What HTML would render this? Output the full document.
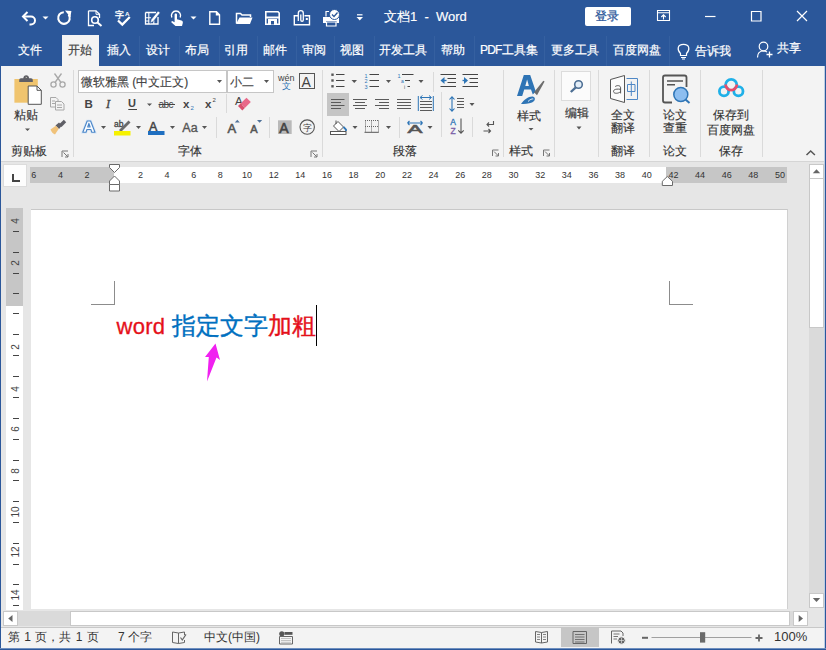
<!DOCTYPE html>
<html><head><meta charset="utf-8">
<style>
*{margin:0;padding:0;box-sizing:border-box}
html,body{width:826px;height:650px;overflow:hidden;background:#e6e6e6;font-family:"Liberation Sans",sans-serif;}
.a{position:absolute}
.t{position:absolute;white-space:nowrap;line-height:1}
svg{position:absolute;overflow:visible}
#title{left:0;top:0;width:826px;height:66px;background:#2b579a}
.tab{position:absolute;top:42px;font-size:12px;color:#fff;line-height:16px;white-space:nowrap;-webkit-text-stroke:0.2px #fff}
.sep{position:absolute;background:#e1e1e1;width:1px}
.lbl{position:absolute;font-size:12px;color:#333;line-height:14px;white-space:nowrap;-webkit-text-stroke:0.15px #333}
.dd{position:absolute;width:0;height:0;border-left:2.5px solid transparent;border-right:2.5px solid transparent;border-top:3px solid #555}
.rn{position:absolute;font-size:9px;color:#333;line-height:9px;top:171px;white-space:nowrap}
.vt{position:absolute;left:13px;width:6px;height:1px;background:#444}
.vn{position:absolute;font-size:10px;color:#444;line-height:10px;transform:rotate(-90deg);white-space:nowrap}
.sb{position:absolute;font-size:12px;color:#333;line-height:14px;white-space:nowrap}
</style></head><body>
<!-- title + tabs -->
<div id="title" class="a"></div>

<svg style="left:0;top:0" width="826" height="34" viewBox="0 0 826 34" fill="none" stroke="#fff" stroke-width="1.6">
 <!-- undo -->
 <path d="M24 16.5 H31 A4 4 0 0 1 31 24.5 H29.5" stroke-width="2"/>
 <path d="M27.5 12 L23 16.5 L27.5 21" stroke-width="2"/>
 <path d="M42.5 16.5 H48.5 L45.5 19.5 Z" fill="#fff" stroke="none"/>
 <!-- redo circle -->
 <path d="M63.8 12.2 A5.8 5.8 0 1 0 68.6 14.5" stroke-width="2.1"/>
 <path d="M65 10.6 L71.4 10.9 L70.4 17.2 Z" fill="#fff" stroke="none"/>
 <!-- print preview -->
 <path d="M88.5 10.8 H96 L99.5 14.3 V18 M88.5 10.8 V25.5 H94" stroke-width="1.3"/>
 <path d="M96 10.8 V14.3 H99.5" stroke-width="1"/>
 <circle cx="95" cy="20" r="3.3" stroke-width="1.6"/>
 <path d="M97.5 22.5 L101.5 26" stroke-width="2"/>
 <!-- spelling -->
 <text x="114.8" y="17.8" font-size="8.6" fill="#fff" stroke="#fff" stroke-width="0.35" font-family="Liberation Sans">字</text>
 <text x="125" y="15.6" font-size="6.2" font-weight="bold" fill="#fff" stroke="none" font-family="Liberation Sans">A</text>
 <path d="M118 20.5 L122.3 24.6 L129.8 17" stroke-width="2.3"/>
 <!-- edit table -->
 <path d="M145.5 12.5 H156 M145.5 12.5 V24 H158 V17" stroke-width="1.3"/>
 <path d="M148.8 12.5 V24 M145.5 17.8 H151 M145.5 21 H149 M153.8 20.5 V24" stroke-width="1.1"/>
 <path d="M150.2 23 L151.2 19.5 L158 11 L160.2 12.8 L153.4 21.4 Z" fill="#fff" stroke="#2b579a" stroke-width="0.6"/>
 <!-- touch -->
 <path d="M171.8 17.5 A4.6 4.6 0 1 1 180.2 17.5" stroke-width="1.4"/>
 <path d="M174.6 14.5 C174.6 13 177 13 177 14.5 V19.3 L181.5 20.5 C182.8 21 183 22 182.8 23 L182 26 H175.5 L171.5 22.5 C171 21.8 171.8 20.8 172.6 21.2 L174.6 22.3 Z" fill="#fff" stroke="none"/>
 <path d="M190.5 16.5 H196.5 L193.5 19.5 Z" fill="#fff" stroke="none"/>
 <!-- new doc -->
 <path d="M209.8 11.8 H216.5 L219.5 14.8 V24.3 H209.8 Z M216.5 11.8 V14.8 H219.5" stroke-width="1.4"/>
 <!-- open folder -->
 <path d="M236.5 23.5 V13.5 H240.5 L242 15 H250.5 V17" stroke-width="1.5"/>
 <path d="M236 24 L239.5 17.5 H252.5 L250 24 Z" fill="#fff" stroke="none"/>
 <!-- save -->
 <path d="M265.8 11.8 H278 L279.2 13 V24.2 H265.8 Z" stroke-width="1.6"/>
 <path d="M265.8 17.5 H279.2" stroke-width="2"/>
 <path d="M268 19 H277 V24.5 H268 Z" fill="#fff" stroke="none"/>
 <path d="M271 21 H274 V24.5 H271 Z" fill="#2b579a" stroke="none"/>
 <!-- attach -->
 <path d="M298 15.8 H294.3 V24.8 H309.5 V15.8 H304.5" stroke-width="1.4"/>
 <path d="M298.3 21 V13.2 A2.5 2.5 0 0 1 303.3 13.2 V20 A1.25 1.25 0 0 1 300.8 20 V14.5" stroke-width="1.3"/>
 <rect x="305.8" y="18" width="2" height="2" fill="#fff" stroke="none"/>
 <!-- printer check -->
 <path d="M323 17 H339 V23 H336.5 V21 H326 V23 H323 Z" fill="#fff" stroke="none"/>
 <path d="M326.5 22 H336 V26 H326.5 Z" stroke-width="1.2"/>
 <path d="M326 16.5 V11.5 H329" stroke-width="1.2"/>
 <circle cx="334.5" cy="14.5" r="5" fill="#fff" stroke="#2b579a" stroke-width="1"/>
 <path d="M332 14.5 L334 16.5 L337.5 12.5" stroke="#2b579a" stroke-width="1.3"/>
 <!-- customize -->
 <path d="M357 14.8 H362.5" stroke-width="1.2"/>
 <path d="M356.5 17 H363 L359.75 20.5 Z" fill="#fff" stroke="none"/>
 <!-- ribbon display -->
 <path d="M657.5 10.5 H669.5 V20.5 H657.5 Z M657.5 12.8 H669.5" stroke-width="1.1"/>
 <path d="M663.5 19.5 V15 M661.3 17 L663.5 14.8 L665.7 17" stroke-width="1.1"/>
 <!-- min max close -->
 <path d="M705 16.5 H715.5" stroke-width="1.2"/>
 <path d="M751.5 11.5 H761 V21 H751.5 Z" stroke-width="1.2"/>
 <path d="M797 11 L807 21 M807 11 L797 21" stroke-width="1.2"/>
</svg>
<div class="t" style="left:384px;top:10px;font-size:13px;color:#fff;line-height:13px;-webkit-text-stroke:0.15px #fff">文档1&nbsp; -&nbsp; Word</div>
<div class="a" style="left:585px;top:7px;width:46px;height:19px;background:#fff;border-radius:2px"></div>
<div class="t" style="left:595px;top:10px;font-size:12px;color:#2b579a;line-height:13px;-webkit-text-stroke:0.25px #2b579a">登录</div>

<!-- tabs -->
<!-- tab separators -->
<div class="a" style="left:139px;top:36px;width:1px;height:30px;background:#3560a0"></div>
<div class="a" style="left:179px;top:36px;width:1px;height:30px;background:#3560a0"></div>
<div class="a" style="left:219px;top:36px;width:1px;height:30px;background:#3560a0"></div>
<div class="a" style="left:257px;top:36px;width:1px;height:30px;background:#3560a0"></div>
<div class="a" style="left:296px;top:36px;width:1px;height:30px;background:#3560a0"></div>
<div class="a" style="left:334px;top:36px;width:1px;height:30px;background:#3560a0"></div>
<div class="a" style="left:374px;top:36px;width:1px;height:30px;background:#3560a0"></div>
<div class="a" style="left:434px;top:36px;width:1px;height:30px;background:#3560a0"></div>
<div class="a" style="left:474px;top:36px;width:1px;height:30px;background:#3560a0"></div>
<div class="a" style="left:544px;top:36px;width:1px;height:30px;background:#3560a0"></div>
<div class="a" style="left:606px;top:36px;width:1px;height:30px;background:#3560a0"></div>
<div class="a" style="left:669px;top:36px;width:1px;height:30px;background:#3560a0"></div>

<div class="a" style="left:62px;top:35px;width:37px;height:31px;background:#f3f3f3"></div>
<div class="tab" style="left:18px">文件</div>
<div class="tab" style="left:68px;color:#444;-webkit-text-stroke:0.2px #444">开始</div>
<div class="tab" style="left:107px">插入</div>
<div class="tab" style="left:146px">设计</div>
<div class="tab" style="left:185px">布局</div>
<div class="tab" style="left:224px">引用</div>
<div class="tab" style="left:263px">邮件</div>
<div class="tab" style="left:302px">审阅</div>
<div class="tab" style="left:340px">视图</div>
<div class="tab" style="left:379px">开发工具</div>
<div class="tab" style="left:441px">帮助</div>
<div class="tab" style="left:480px"><span style="letter-spacing:-0.8px">PDF</span>工具集</div>
<div class="tab" style="left:551px">更多工具</div>
<div class="tab" style="left:613px">百度网盘</div>
<div class="tab" style="left:695px;top:43px">告诉我</div>
<div class="tab" style="left:777px;top:40px">共享</div>

<!-- ribbon -->
<div class="a" style="left:0;top:66px;width:826px;height:96px;background:#f3f3f3;border-bottom:1px solid #d5d5d5"></div>


<!-- ribbon labels -->
<div class="lbl" style="left:14px;top:108px">粘贴</div>
<div class="lbl" style="left:11px;top:144px">剪贴板</div>
<div class="lbl" style="left:178px;top:144px">字体</div>
<div class="lbl" style="left:393px;top:144px">段落</div>
<div class="lbl" style="left:517px;top:109px">样式</div>
<div class="lbl" style="left:509px;top:144px">样式</div>
<div class="lbl" style="left:565px;top:106px">编辑</div>
<div class="lbl" style="left:611px;top:108px">全文</div>
<div class="lbl" style="left:611px;top:121px">翻译</div>
<div class="lbl" style="left:611px;top:144px">翻译</div>
<div class="lbl" style="left:663px;top:108px">论文</div>
<div class="lbl" style="left:663px;top:121px">查重</div>
<div class="lbl" style="left:663px;top:144px">论文</div>
<div class="lbl" style="left:713px;top:108px">保存到</div>
<div class="lbl" style="left:707px;top:123px">百度网盘</div>
<div class="lbl" style="left:719px;top:144px">保存</div>
<!-- font boxes -->
<div class="a" style="left:78px;top:70px;width:149px;height:23px;background:#fff;border:1px solid #c6c6c6"></div>
<div class="a" style="left:227px;top:70px;width:47px;height:23px;background:#fff;border:1px solid #c6c6c6"></div>
<div class="lbl" style="left:81px;top:75px;color:#444">微软雅黑 (中文正文)</div>
<div class="lbl" style="left:230px;top:75px;color:#444">小二</div>
<!-- edit box -->
<div class="a" style="left:561px;top:71px;width:30px;height:30px;background:#fbfbfb;border:1px solid #dcdcdc"></div>
<!-- selected align-left -->
<div class="a" style="left:327px;top:93px;width:22px;height:23px;background:#c5c5c5"></div>


<svg style="left:0;top:0" width="826" height="650" viewBox="0 0 826 650" fill="none" stroke="#555" stroke-width="1">
 <!-- separators -->
 <g stroke="#dadada">
  <path d="M73.5 70 V157 M322.5 70 V157 M503.5 70 V157 M554.5 70 V157 M598.5 70 V157 M649.5 70 V157 M700.5 70 V157 M762.5 70 V157"/>
  <path d="M226.5 94 V113 M216.5 117 V138 M269.5 117 V138 M433.5 72 V92 M399.5 117 V138 M441.5 92 V137 M472.5 117 V137"/>
 </g>
 <!-- paste -->
 <path d="M14.4 79 H37.8 V102.7 H14.4 Z" fill="#f0c46e" stroke="none"/>
 <path d="M19.2 82 V80 Q19.2 78.3 21 78.3 H23.3 Q23.6 75.2 26.2 75.2 Q28.8 75.2 29.1 78.3 H31 Q32.8 78.3 32.8 80 V82 Z" fill="#5f5f66" stroke="none"/>
 <circle cx="26.2" cy="77.6" r="1" fill="#f3f3f3"/>
 <path d="M28.2 86 H37 L41.3 90.3 V104.3 H28.2 Z" fill="#fff" stroke="#555" stroke-width="1"/>
 <path d="M37 86 V90.3 H41.3" stroke="#555"/>
 <path d="M25 128.5 H30 L27.5 131 Z" fill="#555" stroke="none"/>
 <!-- launchers -->
 <g stroke="#777" stroke-width="1">
  <path d="M62 157 V151 H68 M63.5 152.5 L68 157 M65 157 H68 V154"/>
  <path d="M311 157 V151 H317 M312.5 152.5 L317 157 M314 157 H317 V154"/>
  <path d="M492.5 156 V150 H498.5 M494 151.5 L498.5 156 M495.5 156 H498.5 V153"/>
  <path d="M543.5 156 V150 H549.5 M545 151.5 L549.5 156 M546.5 156 H549.5 V153"/>
 </g>
 <!-- scissors -->
 <g stroke="#a8a8a8" stroke-width="1.3">
  <circle cx="53.5" cy="84.5" r="2.6"/><circle cx="62.5" cy="84.5" r="2.6"/>
  <path d="M55 82.5 L61.5 73.5 M61 82.5 L54.5 73.5"/>
 </g>
 <!-- copy -->
 <g stroke="#a8a8a8" stroke-width="1">
  <path d="M50.5 97.5 H56 L58 99.5 V107 H50.5 Z"/>
  <path d="M55.5 101.5 H61.5 L64 104 V110 H55.5 Z" fill="#f3f3f3"/>
  <path d="M52 101 H55 M52 103.5 H55 M57 105 H62 M57 107.5 H62"/>
 </g>
 <!-- format painter -->
 <path d="M63.8 119.8 L66.2 122.2 L61.5 127 L59 124.5 Z" fill="#5f5f66" stroke="none"/>
 <path d="M55.5 125.5 L59 122.5 L62 125.5 L59 129 Z" fill="#5f5f66" stroke="none"/>
 <path d="M50.5 129.5 L55.8 125.8 L58.8 128.8 L55 134.5 Q52 133.5 50.5 129.5 Z" fill="#f0c27a" stroke="none"/>
 <!-- font dropdowns -->
 <path d="M217 80 H222 L219.5 83 Z" fill="#555" stroke="none"/>
 <path d="M264 80 H269 L266.5 83 Z" fill="#555" stroke="none"/>
 <!-- wen -->
 <text x="278" y="81" font-size="9" fill="#444" stroke="none" font-family="Liberation Sans">wén</text>
 <text x="281.5" y="89" font-size="8.5" fill="#2e75b6" stroke="none" font-family="Liberation Sans">文</text>
 <!-- bordered A -->
 <rect x="299.5" y="73.5" width="15" height="15" stroke="#555" stroke-width="1"/>
 <text x="301.5" y="86.5" font-size="14" fill="#444" stroke="none" font-family="Liberation Sans">A</text>
 <!-- B I U abc x2 x2 -->
 <text x="84.5" y="108" font-size="11.5" font-weight="bold" fill="#444" stroke="none" font-family="Liberation Sans">B</text>
 <text x="106" y="108.3" font-size="12.5" font-style="italic" fill="#444" stroke="#444" stroke-width="0.3" font-family="Liberation Serif">I</text>
 <text x="128" y="107" font-size="11" font-weight="bold" fill="#444" stroke="none" font-family="Liberation Sans">U</text>
 <path d="M128.3 109.5 H137" stroke="#444" stroke-width="1"/>
 <path d="M147 103.5 H152 L149.5 106 Z" fill="#555" stroke="none"/>
 <text x="158.5" y="108" font-size="10" fill="#444" stroke="none" font-family="Liberation Sans" letter-spacing="-0.5">abc</text>
 <path d="M158.5 104.5 H175" stroke="#444" stroke-width="1"/>
 <text x="183" y="107.5" font-size="11.5" font-weight="bold" fill="#444" stroke="none" font-family="Liberation Sans">x</text>
 <text x="190.5" y="109.5" font-size="6" fill="#2e75b6" stroke="none" font-family="Liberation Sans">2</text>
 <text x="205" y="108" font-size="11.5" font-weight="bold" fill="#444" stroke="none" font-family="Liberation Sans">x</text>
 <text x="212.5" y="102" font-size="6" fill="#444" stroke="none" font-family="Liberation Sans">2</text>
 <!-- clear formatting -->
 <text x="235" y="105" font-size="11.5" fill="#444" stroke="none" font-family="Liberation Sans">A</text>
 <path d="M240.5 103.5 L246.5 97.8 L250.8 102 L244.8 108 Z" fill="#e8698a" stroke="none"/>
 <path d="M238 106 L240.5 103.5 L244.8 108 L242.3 110.5 Z" fill="#d94f6e" stroke="none"/>
 <!-- text effects A -->
 <path d="M82.8 132.3 L87.2 121 H90.6 L95 132.3 H91.8 L90.9 129.5 H86.9 L86 132.3 Z M87.7 127 H90.1 L88.9 123.3 Z" fill="#fafcff" stroke="#d5e4f5" stroke-width="2.6" fill-rule="evenodd"/>
 <path d="M82.8 132.3 L87.2 121 H90.6 L95 132.3 H91.8 L90.9 129.5 H86.9 L86 132.3 Z M87.7 127 H90.1 L88.9 123.3 Z" fill="#fafcff" stroke="#4a86c8" stroke-width="1.1" fill-rule="evenodd" stroke-linejoin="round"/>
 <path d="M101 126 H106 L103.5 129 Z" fill="#555" stroke="none"/>
 <!-- highlight -->
 <text x="114" y="127" font-size="8.5" fill="#444" stroke="#444" stroke-width="0.3" font-family="Liberation Sans">ab</text>
 <path d="M119 130 L128.5 120.5 L130.5 122.5 L121 132 Z" fill="#6b6b6b" stroke="none"/>
 <rect x="114" y="131" width="16.5" height="4.5" fill="#f6f100" stroke="none"/>
 <path d="M136 126 H141 L138.5 129 Z" fill="#555" stroke="none"/>
 <!-- font color -->
 <text x="149" y="130.5" font-size="12.5" fill="#444" stroke="#444" stroke-width="0.5" font-family="Liberation Sans">A</text>
 <rect x="148" y="131" width="16.5" height="4" fill="#1f6fc0" stroke="none"/>
 <path d="M170 126 H175 L172.5 129 Z" fill="#555" stroke="none"/>
 <!-- Aa -->
 <text x="182.3" y="131.5" font-size="12.5" fill="#555" stroke="#555" stroke-width="0.35" font-family="Liberation Sans">Aa</text>
 <path d="M202 126 H207 L204.5 129 Z" fill="#555" stroke="none"/>
 <!-- grow shrink -->
 <text x="227.5" y="133" font-size="13" fill="#555" stroke="#555" stroke-width="0.6" font-family="Liberation Sans">A</text>
 <path d="M234.8 122.6 L237.3 119.8 L239.8 122.6 Z" fill="#50729a" stroke="none"/>
 <text x="250.2" y="133" font-size="11" fill="#555" stroke="#555" stroke-width="0.55" font-family="Liberation Sans">A</text>
 <path d="M257 120 H262.2 L259.6 122.8 Z" fill="#50729a" stroke="none"/>
 <!-- shaded A -->
 <rect x="278" y="120.3" width="13.7" height="13.7" fill="#b9b9b9" stroke="none"/>
 <text x="279.3" y="132.5" font-size="14" fill="#444" stroke="#444" stroke-width="0.6" font-family="Liberation Sans">A</text>
 <!-- enclosed zi -->
 <circle cx="307.2" cy="127.1" r="7.2" stroke="#555" stroke-width="1.1"/>
 <text x="303" y="130.8" font-size="8.5" fill="#444" stroke="none" font-family="Liberation Sans">字</text>
 <!-- bullets -->
 <g fill="#555" stroke="none">
  <rect x="331.3" y="73.5" width="2.4" height="2.4"/><rect x="331.3" y="79.3" width="2.4" height="2.4"/><rect x="331.3" y="85.1" width="2.4" height="2.4"/>
 </g>
 <path d="M336 74.5 H344.5 M336 80.5 H344.5 M336 86.5 H344.5" stroke="#444"/>
 <path d="M351.5 80 H357 L354.25 83 Z" fill="#555" stroke="none"/>
 <!-- numbering -->
 <text x="364.5" y="77.5" font-size="5.5" fill="#2e75b6" stroke="none" font-family="Liberation Sans">1</text>
 <text x="364.5" y="83" font-size="5.5" fill="#2e75b6" stroke="none" font-family="Liberation Sans">2</text>
 <text x="364.5" y="88.5" font-size="5.5" fill="#2e75b6" stroke="none" font-family="Liberation Sans">3</text>
 <path d="M369.5 74.5 H379 M369.5 80.5 H379 M369.5 86.5 H379" stroke="#444"/>
 <path d="M386 80 H391 L388.5 83 Z" fill="#555" stroke="none"/>
 <!-- multilevel -->
 <text x="397.5" y="77.5" font-size="5.5" fill="#2e75b6" stroke="none" font-family="Liberation Sans">1</text>
 <text x="401" y="83" font-size="5" fill="#2e75b6" stroke="none" font-family="Liberation Sans">a</text>
 <text x="404" y="88.5" font-size="5" fill="#555" stroke="none" font-family="Liberation Sans">i</text>
 <path d="M402 74.5 H413.5 M405 80.5 H410 M407.5 86.5 H410" stroke="#444"/>
 <path d="M418.5 80 H423.5 L421 83 Z" fill="#555" stroke="none"/>
 <!-- indent -->
 <path d="M440.5 74.5 H456 M447.5 78.5 H456 M447.5 82.5 H456 M440.5 86.5 H456" stroke="#444"/>
 <path d="M440.5 80.5 L444.5 77 V84 Z" fill="#2e75b6" stroke="none"/>
 <path d="M442 80.5 H446.5" stroke="#2e75b6" stroke-width="1.3"/>
 <path d="M462.5 74.5 H478 M469.5 78.5 H478 M469.5 82.5 H478 M462.5 86.5 H478" stroke="#444"/>
 <path d="M468 80.5 L464 77 V84 Z" fill="#2e75b6" stroke="none"/>
 <path d="M462.5 80.5 H465" stroke="#2e75b6" stroke-width="1.3"/>
 <!-- align -->
 <path d="M331 99.5 H344.5 M331 102.5 H341 M331 105.5 H344.5 M331 108.5 H341" stroke="#5a5a5a"/>
 <path d="M353 99.5 H367 M355 102.5 H365 M353 105.5 H367 M355 108.5 H365" stroke="#5a5a5a"/>
 <path d="M375 99.5 H389 M379 102.5 H389 M375 105.5 H389 M379 108.5 H389" stroke="#5a5a5a"/>
 <path d="M397 99.5 H411 M397 102.5 H411 M397 105.5 H411 M397 108.5 H411" stroke="#5a5a5a"/>
 <path d="M418.3 96 V111 M433.3 96 V111" stroke="#2e75b6"/>
 <path d="M420 101.5 H432 M420 104.5 H432 M420 107.5 H432 M420 110.5 H432" stroke="#5a5a5a"/>
 <path d="M420.5 97.5 H431 M420 97.5 L422.5 95.5 M420 97.5 L422.5 99.5 M431.5 97.5 L429 95.5 M431.5 97.5 L429 99.5" stroke="#2e75b6"/>
 <!-- line spacing -->
 <path d="M452 97 V111 M449.5 99.5 L452 96.8 L454.5 99.5 M449.5 108.5 L452 111.2 L454.5 108.5" stroke="#2e75b6" stroke-width="1.1"/>
 <path d="M457 98.5 H464 M457 101.5 H464 M457 104.5 H464 M457 107.5 H464" stroke="#5a5a5a"/>
 <path d="M469.5 103 H474.5 L472 106 Z" fill="#555" stroke="none"/>
 <!-- shading -->
 <path d="M331 130 L337 124 L343 130 L337 136" stroke="none"/>
 <path d="M333.5 126 L338 121.5 L343.5 127 L339 131.5 Z" fill="#fff" stroke="#555"/>
 <path d="M336 120.5 V124" stroke="#555"/>
 <path d="M343.5 127 L346 129.5 V131" stroke="#2e75b6" stroke-width="1.8"/>
 <rect x="330.5" y="131.5" width="15.5" height="3" fill="#fff" stroke="#555"/>
 <path d="M352.5 126 H357.5 L355 129 Z" fill="#555" stroke="none"/>
 <!-- borders -->
 <path d="M365 120.5 H379 M365 126.5 H379 M365.5 120.5 V132 M371.5 120.5 V132 M378.5 120.5 V132" stroke="#666" stroke-dasharray="1 1"/>
 <path d="M364.5 132.3 H378.8" stroke="#555"/>
 <path d="M386 126 H391 L388.5 129 Z" fill="#555" stroke="none"/>
 <!-- asian layout -->
 <text x="407.5" y="133" font-size="11" fill="#555" stroke="#555" stroke-width="0.5" font-family="Liberation Sans" textLength="15" lengthAdjust="spacingAndGlyphs">A</text>
 <path d="M407.5 123 H422.5 M407.5 123 L409.5 121 M407.5 123 L409.5 125 M422.5 123 L420.5 121 M422.5 123 L420.5 125" stroke="#2e75b6" stroke-width="1.1"/>
 <path d="M427.5 126 H432.5 L430 129 Z" fill="#555" stroke="none"/>
 <!-- sort -->
 <text x="450.2" y="125.2" font-size="8.5" fill="#2e75b6" stroke="#2e75b6" stroke-width="0.3" font-family="Liberation Sans">A</text>
 <text x="450.5" y="133.6" font-size="8.5" fill="#7a5ea8" stroke="#7a5ea8" stroke-width="0.3" font-family="Liberation Sans">Z</text>
 <path d="M461 118.5 V133 M458.3 130.3 L461 133.2 L463.7 130.3" stroke="#555" stroke-width="1.1"/>
 <!-- show marks -->
 <path d="M493.5 121 V124.5 H487 M489 122.5 L487 124.5 L489 126.5" stroke="#555" stroke-width="1.1"/>
 <path d="M483.5 131 H490.5 M488.5 129 L490.5 131 L488.5 133" stroke="#555" stroke-width="1.1"/>
 <!-- styles -->
 <path d="M517 96 L523.8 75 H530.2 L535.8 91.5 L532.8 94.5 L531 89.5 H524.2 L522.2 96 Z M525.3 86 L527.1 79.5 L528.9 86 Z" fill="#2e74b5" stroke="none" fill-rule="evenodd"/>
 <path d="M534 92.3 L543.3 80.8 L544.6 81.6 L537 95.2 Z" fill="#6d6d6d" stroke="none"/>
 <path d="M521 104 C524 99.5 528.5 96.2 532.8 96.5 C535.8 97.3 535.5 101 532 102.5 C528.5 103.8 524.5 104 521 104 Z" fill="#2e74b5" stroke="none"/>
 <path d="M528 101.5 C530 99.5 532 98.6 533.3 99" stroke="#fff" stroke-width="0.9"/>
 <path d="M528.5 128 H533.5 L531 130.5 Z" fill="#555" stroke="none"/>
 <!-- edit magnifier -->
 <circle cx="578.5" cy="84.5" r="3.8" fill="#e3eef8" stroke="#4d6f94" stroke-width="1.6"/>
 <path d="M575.8 87.3 L570.8 92" stroke="#4d6f94" stroke-width="2.3"/>
 <path d="M576.5 126.5 H581.5 L579 129.5 Z" fill="#555" stroke="none"/>
 <!-- translate -->
 <path d="M610.5 79.5 L624.5 75.5 V102.5 L610.5 98.5 Z" fill="#fbfbfb" stroke="#555" stroke-width="1"/>
 <path d="M615.2 86.6 C617 85 620.6 85.3 620.6 87.8 V93.4 M620.6 89.3 C614.5 88.5 613.2 90.3 613.6 91.8 C614 93.8 618.3 93.8 620.6 91.6" stroke="#555" stroke-width="1"/>
 <path d="M626.5 78.5 H637.5 V99.5 H626.5" stroke="#4f88c6" stroke-width="1"/>
 <path d="M627.5 84.5 H635 V91.5 H627.5 Z M631.3 81.5 V96" stroke="#4f88c6" stroke-width="1"/>
 <!-- thesis -->
 <path d="M672 102.5 H665 Q663 102.5 663 100.5 V77.5 Q663 75.5 665 75.5 H684.5 Q686.5 75.5 686.5 77.5 V87" stroke="#555" stroke-width="1.8"/>
 <path d="M667 81 H683 M667 84.8 H675" stroke="#555" stroke-width="1.6"/>
 <circle cx="680.8" cy="94.5" r="7" fill="#8dbef0" stroke="#2e75b6" stroke-width="1.5"/>
 <path d="M685.5 99.5 L689.5 103" stroke="#2e75b6" stroke-width="2"/>
 <!-- baidu -->
 <circle cx="724" cy="91.3" r="4.6" stroke="#1fb0e8" stroke-width="2.8"/>
 <circle cx="738.4" cy="91.3" r="4.6" stroke="#1fb0e8" stroke-width="2.8"/>
 <path d="M725.6 85 A5.6 5.6 0 0 1 736.8 85" stroke="#1fb0e8" stroke-width="2.8"/>
 <path d="M725.6 84.5 A5.6 5.6 0 0 0 736.8 84.5" stroke="#ea4c6a" stroke-width="2.8"/>
 <!-- collapse -->
 <path d="M806.5 155 L810.7 151 L814.9 155" stroke="#555" stroke-width="1.5"/>
</svg>


<!-- canvas -->
<div class="a" id="canvas" style="left:0;top:162px;width:826px;height:465px;background:#e6e6e6"></div>
<!-- status bar -->
<div class="a" style="left:0;top:627px;width:826px;height:23px;background:#f3f3f3;border-top:1px solid #c8c8c8"></div>
<!-- tab selector -->
<div class="a" style="left:3px;top:164px;width:24px;height:23px;background:#dcdcdc"></div>
<div class="a" style="left:4px;top:165px;width:22px;height:21px;background:#fdfdfd"></div>
<div class="a" style="left:12px;top:174px;width:2px;height:8px;background:#444"></div>
<div class="a" style="left:12px;top:180px;width:8px;height:2px;background:#444"></div>
<!-- ruler -->
<div class="a" style="left:30px;top:167px;width:757px;height:16px;background:#c6c6c6"></div>
<div class="a" style="left:114px;top:167px;width:552px;height:16px;background:#fff"></div>
<!-- page -->
<div class="a" style="left:31px;top:209px;width:757px;height:400px;background:#fff;border-top:1px solid #c8c8c8;border-right:1px solid #d0d0d0"></div>
<!-- vertical ruler -->
<div class="a" style="left:6px;top:208px;width:17px;height:98px;background:#c6c6c6"></div>
<div class="a" style="left:6px;top:306px;width:17px;height:304px;background:#fff"></div>
<!-- crop marks -->
<div class="a" style="left:114px;top:281px;width:1px;height:24px;background:#8c8c8c"></div>
<div class="a" style="left:91px;top:304px;width:24px;height:1px;background:#8c8c8c"></div>
<div class="a" style="left:669px;top:281px;width:1px;height:24px;background:#8c8c8c"></div>
<div class="a" style="left:669px;top:304px;width:24px;height:1px;background:#8c8c8c"></div>
<!-- ruler numbers -->
<div class="rn" style="left:23.80px;width:20px;text-align:center">6</div>
<div class="rn" style="left:50.45px;width:20px;text-align:center">4</div>
<div class="rn" style="left:77.10px;width:20px;text-align:center">2</div>
<div class="rn" style="left:130.40px;width:20px;text-align:center">2</div>
<div class="rn" style="left:157.05px;width:20px;text-align:center">4</div>
<div class="rn" style="left:183.70px;width:20px;text-align:center">6</div>
<div class="rn" style="left:210.35px;width:20px;text-align:center">8</div>
<div class="rn" style="left:237.00px;width:20px;text-align:center">10</div>
<div class="rn" style="left:263.65px;width:20px;text-align:center">12</div>
<div class="rn" style="left:290.30px;width:20px;text-align:center">14</div>
<div class="rn" style="left:316.95px;width:20px;text-align:center">16</div>
<div class="rn" style="left:343.60px;width:20px;text-align:center">18</div>
<div class="rn" style="left:370.25px;width:20px;text-align:center">20</div>
<div class="rn" style="left:396.90px;width:20px;text-align:center">22</div>
<div class="rn" style="left:423.55px;width:20px;text-align:center">24</div>
<div class="rn" style="left:450.20px;width:20px;text-align:center">26</div>
<div class="rn" style="left:476.85px;width:20px;text-align:center">28</div>
<div class="rn" style="left:503.50px;width:20px;text-align:center">30</div>
<div class="rn" style="left:530.15px;width:20px;text-align:center">32</div>
<div class="rn" style="left:556.80px;width:20px;text-align:center">34</div>
<div class="rn" style="left:583.45px;width:20px;text-align:center">36</div>
<div class="rn" style="left:610.10px;width:20px;text-align:center">38</div>
<div class="rn" style="left:636.75px;width:20px;text-align:center">40</div>
<div class="rn" style="left:663.40px;width:20px;text-align:center">42</div>
<div class="rn" style="left:690.05px;width:20px;text-align:center">44</div>
<div class="rn" style="left:716.70px;width:20px;text-align:center">46</div>
<div class="rn" style="left:743.35px;width:20px;text-align:center">48</div>
<div class="rn" style="left:770.00px;width:20px;text-align:center">50</div>
<svg style="left:0;top:0" width="826" height="650" fill="#fff" stroke="#6a6a6a" stroke-width="1">
 <path d="M109.5 164.5 H119.5 V167.5 L114.5 172.5 L109.5 167.5 Z"/>
 <path d="M114.5 176 L119.5 181 V184.5 H109.5 V181 Z"/>
 <path d="M109.5 184.5 H119.5 V191 H109.5 Z"/>
 <path d="M667.3 176.5 L672.5 181.3 V185.5 H662.3 V181.3 Z"/>
</svg>
<div class="vt" style="top:231px"></div>
<div class="vt" style="top:252px"></div>
<div class="vt" style="top:273px"></div>
<div class="vt" style="top:293px"></div>
<div class="vt" style="top:313px"></div>
<div class="vt" style="top:334px"></div>
<div class="vt" style="top:355px"></div>
<div class="vt" style="top:376px"></div>
<div class="vt" style="top:397px"></div>
<div class="vt" style="top:418px"></div>
<div class="vt" style="top:439px"></div>
<div class="vt" style="top:460px"></div>
<div class="vt" style="top:480px"></div>
<div class="vt" style="top:501px"></div>
<div class="vt" style="top:522px"></div>
<div class="vt" style="top:543px"></div>
<div class="vt" style="top:564px"></div>
<div class="vt" style="top:584px"></div>
<div class="vt" style="top:605px"></div>
<div class="vn" style="left:6px;top:216.4px;width:20px;height:10px;text-align:center">4</div>
<div class="vn" style="left:6px;top:258.0px;width:20px;height:10px;text-align:center">2</div>
<div class="vn" style="left:6px;top:341.6px;width:20px;height:10px;text-align:center">2</div>
<div class="vn" style="left:6px;top:383.6px;width:20px;height:10px;text-align:center">4</div>
<div class="vn" style="left:6px;top:424.2px;width:20px;height:10px;text-align:center">6</div>
<div class="vn" style="left:6px;top:465.9px;width:20px;height:10px;text-align:center">8</div>
<div class="vn" style="left:6px;top:507.0px;width:20px;height:10px;text-align:center">10</div>
<div class="vn" style="left:6px;top:547.4px;width:20px;height:10px;text-align:center">12</div>
<div class="vn" style="left:6px;top:589.5px;width:20px;height:10px;text-align:center">14</div>
<!-- status -->
<div class="sb" style="left:8px;top:630px;word-spacing:1px">第 1 页，共 1 页</div>
<div class="sb" style="left:118px;top:630px">7 个字</div>
<div class="sb" style="left:204px;top:630px">中文(中国)</div>
<div class="a" style="left:561px;top:627px;width:38px;height:20px;background:#c6c6c6"></div>
<div class="sb" style="left:774px;top:630px;font-size:13px">100%</div>
<svg style="left:0;top:0" width="826" height="650" fill="none" stroke="#666" stroke-width="1">
 <!-- proofing book -->
 <path d="M172.5 632 L178.5 633 V643.5 L172.5 642.5 Z M178.5 633 L184.5 632 V635" stroke-width="1"/>
 <path d="M180.5 637.5 L182.3 640 L186 634.3" stroke-width="1.2"/>
 <path d="M178.5 643.5 L184.5 642.5 V640" stroke-width="1"/>
 <!-- macro -->
 <circle cx="281.8" cy="633.8" r="2.6" fill="#555" stroke="none"/>
 <rect x="284.5" y="632" width="8" height="2.8" fill="#555" stroke="none"/>
 <path d="M279.5 636.5 H292.5 V644 H279.5 Z" stroke-width="1"/>
 <path d="M281.5 638.5 H291 M281.5 640.5 H291 M281.5 642.3 H291" stroke="#777" stroke-width="0.8" stroke-dasharray="1 1"/>
 <!-- read mode -->
 <path d="M535.5 631.5 L541.5 632.5 L547.5 631.5 V642 L541.5 643 L535.5 642 Z M541.5 632.5 V643" />
 <path d="M537 634.5 H540 M537 637 H540 M537 639.5 H540 M543 634.5 H546 M543 637 H546 M543 639.5 H546" stroke-width="0.8"/>
 <!-- print layout -->
 <path d="M573 631.5 H586.5 V643.5 H573 Z" />
 <path d="M575 634.5 H584.5 M575 637 H584.5 M575 639.5 H584.5 M575 642 H584.5" stroke-width="0.9"/>
 <!-- web layout -->
 <path d="M611.5 643.5 V631 H621 L623 633 V636" />
 <path d="M613.5 634 H619.5 M613.5 636.5 H618 M613.5 639 H617" stroke-width="0.9"/>
 <circle cx="621.5" cy="640.5" r="3.8" fill="#666" stroke="#f3f3f3" stroke-width="1"/>
 <path d="M619 640.5 H624 M621.5 637.5 V643.5" stroke="#ddd" stroke-width="0.7"/>
 <!-- zoom -->
 <path d="M642 637.8 H648" stroke-width="2"/>
 <path d="M651.5 637.5 H751.5" stroke="#a0a0a0"/>
 <rect x="700" y="632.2" width="5.2" height="10.4" fill="#6a6a6a" stroke="none"/>
 <path d="M755.5 638 H762.5 M759 634.5 V641.5" stroke-width="1.8"/>
</svg>
<!-- tab row icons -->
<svg style="left:0;top:0" width="826" height="650" fill="none" stroke="#fff" stroke-width="1.2">
 <path d="M680.5 53.5 C677 50 677 44.3 683.5 44.3 C690 44.3 690 50 686.5 53.5 V55.5 H680.5 Z"/>
 <path d="M681 57.5 H686 M682 59 H685"/>
 <circle cx="763.5" cy="46.5" r="4.3"/>
 <path d="M757.5 57.5 C757.5 53 760 51 763.5 51 C765 51 766 51.3 767 52"/>
 <path d="M769.5 51.5 V57.5 M766.5 54.5 H772.5" stroke-width="1.3"/>
</svg>
<!-- text -->
<div class="t" style="left:116.5px;top:312px;font-size:22px;line-height:30px;color:#e8101a;letter-spacing:0.3px;-webkit-text-stroke:0.3px #e0101a">word</div>
<div class="t" style="left:172px;top:311px;font-size:24px;line-height:30px;color:#0070c0;-webkit-text-stroke:0.4px #0070c0">指定文字</div>
<div class="t" style="left:268px;top:311px;font-size:24px;line-height:30px;color:#e8101a;-webkit-text-stroke:0.4px #e0101a">加粗</div>
<div class="a" style="left:316px;top:305px;width:1px;height:41px;background:#000"></div>
<svg style="left:0;top:0" width="826" height="650"><path d="M215.5 343.5 L220 360 L216.5 357.5 L207 381.5 L208.8 357 L205 357 Z" fill="#f020f0"/></svg>
<!-- vertical scrollbar -->
<div class="a" style="left:809px;top:164px;width:15px;height:444px;background:#dadada"></div>
<div class="a" style="left:809px;top:164px;width:15px;height:15px;background:#fff;border:1px solid #c8c8c8"></div>
<div class="a" style="left:809px;top:178px;width:15px;height:150px;background:#fff;border:1px solid #c8c8c8"></div>
<div class="a" style="left:809px;top:593px;width:15px;height:15px;background:#fff;border:1px solid #c8c8c8"></div>
<!-- horizontal scrollbar -->
<div class="a" style="left:3px;top:611px;width:805px;height:15px;background:#dadada"></div>
<div class="a" style="left:3px;top:611px;width:15px;height:15px;background:#fff;border:1px solid #c8c8c8"></div>
<div class="a" style="left:70px;top:611px;width:720px;height:15px;background:#fff;border:1px solid #c8c8c8"></div>
<div class="a" style="left:793px;top:611px;width:15px;height:15px;background:#fff;border:1px solid #c8c8c8"></div>
<svg style="left:0;top:0" width="826" height="650">
 <path d="M812.8 173.3 H820.2 L816.5 169.3 Z" fill="#666"/>
 <path d="M812.8 598 H820.2 L816.5 602 Z" fill="#666"/>
 <path d="M12.5 615 V622 L8.2 618.5 Z" fill="#666"/>
 <path d="M798.7 615 V622 L803 618.5 Z" fill="#666"/>
</svg>




<!-- window borders -->
<div class="a" style="left:0;top:0;width:1px;height:650px;background:#2b579a"></div>
<div class="a" style="left:824px;top:66px;width:1px;height:584px;background:#bccde3"></div>
<div class="a" style="left:825px;top:0;width:1px;height:650px;background:#2b579a"></div>
<div class="a" style="left:824px;top:0;width:1px;height:66px;background:#2b579a"></div>
<div class="a" style="left:0;top:648px;width:826px;height:1px;background:#6f8fbf"></div>
<div class="a" style="left:0;top:649px;width:826px;height:1px;background:#2b579a"></div>
</body></html>
